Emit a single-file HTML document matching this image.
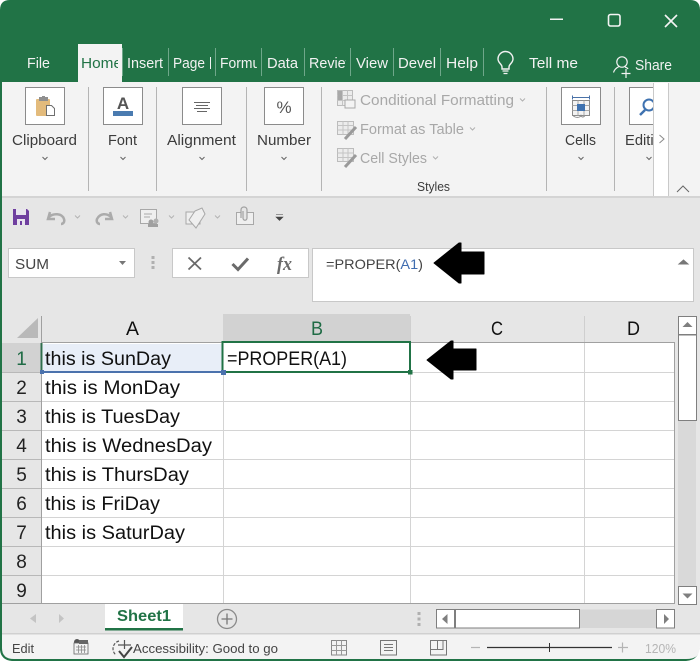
<!DOCTYPE html>
<html><head><meta charset="utf-8"><title>Excel</title>
<style>
html,body{margin:0;padding:0;background:#fff;width:700px;height:661px;overflow:hidden}
svg{display:block;font-family:"Liberation Sans",sans-serif}
</style></head><body>
<svg width="700" height="661" viewBox="0 0 700 661" xmlns="http://www.w3.org/2000/svg">
<defs>
<clipPath id="c1"><rect x="78" y="40" width="40" height="40"/></clipPath>
<clipPath id="c2"><rect x="170" y="40" width="41" height="40"/></clipPath>
<clipPath id="c3"><rect x="217" y="40" width="40" height="40"/></clipPath>
<clipPath id="c4"><rect x="306" y="40" width="40" height="40"/></clipPath>
<clipPath id="c5"><rect x="620" y="120" width="33" height="40"/></clipPath>
</defs>
<!-- frame -->
<path d="M0 661V10Q0 0 10 0H690Q700 0 700 10V661Z" fill="#217346"/>
<rect x="2" y="82" width="698" height="114" fill="#f3f3f3"/>
<rect x="2" y="196" width="698" height="2" fill="#d4d4d4"/>
<rect x="2" y="198" width="698" height="436" fill="#e6e6e6"/>
<path d="M2 634H700V648Q700 659 686 659H14Q2 659 2 648Z" fill="#f3f3f3"/>
<rect x="2" y="633" width="698" height="1.5" fill="#d0d0d0"/>
<path d="M686 661Q700 660 700 645V661Z" fill="#fff"/>
<path d="M0 650Q1 660 12 661H0Z" fill="#fff"/>

<!-- window controls -->
<rect x="550" y="18.5" width="13" height="1.5" fill="#f1f1f1"/>
<rect x="608.5" y="14.5" width="11.5" height="11.5" rx="2" fill="none" stroke="#f4f4f4" stroke-width="1.6"/>
<path d="M665 15L677 27M677 15L665 27" stroke="#f4f4f4" stroke-width="1.6"/>

<!-- tabs -->
<rect x="78" y="44" width="44" height="38" fill="#f3f3f3"/>
<g stroke="#6fa78a" stroke-width="1">
<path d="M122.5 48V76M168.5 48V76M215.5 48V76M261.5 48V76M304.5 48V76M350.5 48V76M393.5 48V76M440.5 48V76M483.5 48V76"/>
</g>
<g fill="#f2f2f2" font-size="14.5">
<text x="27" y="68" textLength="23" lengthAdjust="spacingAndGlyphs">File</text>
<g clip-path="url(#c1)"><text x="81" y="68" fill="#217346" textLength="41" lengthAdjust="spacingAndGlyphs">Home</text></g>
<text x="127" y="68" textLength="36" lengthAdjust="spacingAndGlyphs">Insert</text>
<g clip-path="url(#c2)"><text x="173" y="68" textLength="32" lengthAdjust="spacingAndGlyphs">Page</text><rect x="210" y="57" width="1" height="12"/></g>
<g clip-path="url(#c3)"><text x="220" y="68" textLength="58" lengthAdjust="spacingAndGlyphs">Formulas</text></g>
<text x="267" y="68" textLength="31" lengthAdjust="spacingAndGlyphs">Data</text>
<g clip-path="url(#c4)"><text x="309" y="68" textLength="47" lengthAdjust="spacingAndGlyphs">Review</text></g>
<text x="356" y="68" textLength="32" lengthAdjust="spacingAndGlyphs">View</text>
<text x="398" y="68" textLength="38" lengthAdjust="spacingAndGlyphs">Devel</text>
<text x="446" y="68" textLength="32" lengthAdjust="spacingAndGlyphs">Help</text>
<text x="529" y="68" textLength="49" lengthAdjust="spacingAndGlyphs">Tell me</text>
<text x="635" y="70" textLength="37" lengthAdjust="spacingAndGlyphs">Share</text>
</g>
<!-- bulb -->
<path d="M502 69V67C502 64 498 63 498 59A7.5 7.5 0 0 1 513 59C513 63 509 64 509 67V69Z" fill="none" stroke="#f2f2f2" stroke-width="1.4"/>
<path d="M502.5 71H508.5M503.5 73.5H507.5" stroke="#f2f2f2" stroke-width="1.3"/>
<!-- share -->
<circle cx="622" cy="62" r="5.2" fill="none" stroke="#f2f2f2" stroke-width="1.2"/>
<path d="M613.5 72.5C614.5 69 617 67.5 619 66.5M625 67C626.5 67.5 627.5 68 628 69" fill="none" stroke="#f2f2f2" stroke-width="1.2"/>
<path d="M626 69V78M621.5 73.5H630.5" stroke="#f2f2f2" stroke-width="1.2"/>

<!-- ribbon separators -->
<path d="M88.5 87V191M156.5 87V191M246.5 87V191M321.5 87V191M546.5 87V191M614.5 87V191" stroke="#b4b4b4" stroke-width="1"/>
<!-- ribbon buttons -->
<g fill="#fff" stroke="#8b8b8b" stroke-width="1">
<rect x="25.5" y="87.5" width="39" height="37"/>
<rect x="103.5" y="87.5" width="39" height="37"/>
<rect x="182.5" y="87.5" width="39" height="37"/>
<rect x="264.5" y="87.5" width="39" height="37"/>
<rect x="561.5" y="87.5" width="39" height="37"/>
<rect x="629.5" y="87.5" width="39" height="37"/>
</g>
<!-- clipboard icon -->
<rect x="36" y="99" width="14" height="17" rx="1" fill="#e3bb7c"/>
<rect x="39" y="97" width="9" height="4" fill="#8f8f8f"/>
<rect x="42" y="96" width="3" height="2" fill="#8f8f8f"/>
<path d="M46.5 105.5H51.5L54.5 108.5V115.5H46.5Z" fill="#fff" stroke="#6f6f6f" stroke-width="1"/>
<!-- font icon -->
<text x="123" y="109" text-anchor="middle" font-size="17" font-weight="bold" fill="#555">A</text>
<rect x="113" y="111" width="20" height="5" fill="#4a7bb0"/>
<!-- align icon -->
<path d="M194 102.5H210M196 105.5H208M194 108.5H210M197 111.5H207" stroke="#666" stroke-width="1"/>
<!-- percent -->
<text x="284" y="113" text-anchor="middle" font-size="17" fill="#555">%</text>
<!-- cells icon -->
<path d="M572.5 97.5H589.5M572.5 95.5V99.5M589.5 95.5V99.5" stroke="#4a72a8" stroke-width="1"/>
<rect x="572.5" y="100.5" width="17" height="15" fill="#f3f3f3" stroke="#8a8a8a"/>
<path d="M572.5 105.5H589.5M572.5 110.5H589.5M578 100.5V115.5M584 100.5V115.5" stroke="#a8a8a8"/>
<rect x="577" y="104" width="8" height="7" fill="#3f72b0"/>
<path d="M573 115.5C575 118 580 118 581 115.5C582 118 584 117 585 115.5" fill="none" stroke="#888"/>
<!-- magnifier -->
<circle cx="649" cy="105" r="5.5" fill="none" stroke="#3f72b0" stroke-width="2"/>
<path d="M645 110L640 115" stroke="#3f72b0" stroke-width="2.5"/>

<!-- ribbon labels -->
<g fill="#3c3c3c" font-size="14.5">
<text x="12" y="145" textLength="65" lengthAdjust="spacingAndGlyphs">Clipboard</text>
<text x="108" y="145" textLength="29" lengthAdjust="spacingAndGlyphs">Font</text>
<text x="167" y="145" textLength="69" lengthAdjust="spacingAndGlyphs">Alignment</text>
<text x="257" y="145" textLength="54" lengthAdjust="spacingAndGlyphs">Number</text>
<text x="565" y="145" textLength="31" lengthAdjust="spacingAndGlyphs">Cells</text>
<g clip-path="url(#c5)"><text x="625" y="145" textLength="45" lengthAdjust="spacingAndGlyphs">Editing</text></g>
<text x="417" y="191" font-size="13" textLength="33" lengthAdjust="spacingAndGlyphs">Styles</text>
</g>
<g fill="none" stroke="#666" stroke-width="1">
<path d="M42.5 157L45 159.5L47.5 157M120.5 157L123 159.5L125.5 157M199.5 157L202 159.5L204.5 157M281.5 157L284 159.5L286.5 157M578.5 157L581 159.5L583.5 157M646.5 157L649 159.5L651.5 157"/>
</g>
<!-- styles group -->
<g fill="#a8a8a8" font-size="14.5">
<text x="360" y="105" textLength="154" lengthAdjust="spacingAndGlyphs">Conditional Formatting</text>
<text x="360" y="134" textLength="104" lengthAdjust="spacingAndGlyphs">Format as Table</text>
<text x="360" y="163" textLength="67" lengthAdjust="spacingAndGlyphs">Cell Styles</text>
</g>
<path d="M520 98.5L522.5 101L525 98.5M470 127.5L472.5 130L475 127.5M433 156.5L435.5 159L438 156.5" fill="none" stroke="#b0b0b0"/>
<g stroke="#bcbcbc" fill="#ececec">
<rect x="337.5" y="90.5" width="15" height="15"/>
<rect x="337.5" y="121.5" width="16" height="13"/>
<rect x="337.5" y="148.5" width="16" height="13"/>
</g>
<path d="M337.5 95.5H352.5M337.5 100.5H352.5M342.5 90.5V105.5M347.5 90.5V105.5M337.5 125.5H353.5M337.5 130H353.5M343 121.5V134.5M348 121.5V134.5M337.5 153H353.5M337.5 157.5H353.5M343 148.5V161.5M348 148.5V161.5" stroke="#c4c4c4" fill="none"/>
<rect x="338" y="91" width="4" height="9" fill="#a8a8a8"/>
<rect x="345" y="100" width="10" height="8" fill="#f3f3f3" stroke="#a8a8a8"/>
<path d="M345 139L356 127M345 167L356 155" stroke="#9a9a9a" stroke-width="3"/>

<!-- right scroller strip -->
<rect x="654" y="83" width="14.5" height="113" fill="#fff"/>
<path d="M653.5 83V196M668.5 83V196" stroke="#c9c9c9"/>
<path d="M659.5 135L664 139L659.5 143" fill="none" stroke="#8a8a8a"/>
<path d="M677 192L683 186L689 192" fill="none" stroke="#666"/>

<!-- QAT -->
<path d="M13 209H27L29 211V225H13Z" fill="#6f3f9f"/>
<rect x="16" y="209" width="10" height="6" fill="#e8e4ee"/>
<rect x="17" y="219" width="8" height="6" fill="#e8e4ee"/>
<rect x="20" y="221" width="2" height="4" fill="#6f3f9f"/>
<path d="M50 212L48 219L55 219M49 217C53 213 62 213 64 219C65 222 63 224 61 224" fill="none" stroke="#ababab" stroke-width="2.5"/>
<path d="M110 212L112 219L105 219M111 217C107 213 100 213 97 219C96 222 98 224 100 224" fill="none" stroke="#ababab" stroke-width="2.5"/>
<path d="M75 215.5L77.5 218L80 215.5M123 215.5L125.5 218L128 215.5M169 215.5L171.5 218L174 215.5M215 215.5L217.5 218L220 215.5" fill="none" stroke="#b4b4b4"/>
<rect x="140.5" y="209.5" width="16" height="14" fill="#efefef" stroke="#a8a8a8"/>
<path d="M144 214H152M144 217H150" stroke="#a8a8a8"/>
<circle cx="151" cy="222" r="2.5" fill="#a0a0a0"/><circle cx="156" cy="221" r="2.5" fill="#b0b0b0"/><rect x="148" y="224" width="10" height="3" fill="#a0a0a0"/>
<rect x="186" y="212" width="14" height="12" fill="#efefef" stroke="#a8a8a8"/>
<path d="M195 211L202 208L205 214L196 228L189 220Z" fill="#efefef" stroke="#a8a8a8"/>
<rect x="236.5" y="212.5" width="17" height="12" fill="#efefef" stroke="#a8a8a8"/>
<path d="M241 218V210C241 206 247 206 247 210V218C247 221 243 221 243 218V211" fill="#e6e6e6" stroke="#a0a0a0" stroke-width="1.2"/>
<path d="M276 214.5H283M276 217H283L279.5 220.5Z" fill="#444" stroke="#444" stroke-width=".6"/>

<!-- name box etc. -->
<rect x="8.5" y="248.5" width="126" height="29" fill="#fff" stroke="#c8c8c8"/>
<text x="15" y="269" font-size="14.5" fill="#444" textLength="34" lengthAdjust="spacingAndGlyphs">SUM</text>
<path d="M119 261H126L122.5 265Z" fill="#777"/>
<g fill="#b0b0b0"><rect x="151.5" y="256" width="3" height="3"/><rect x="151.5" y="261" width="3" height="3"/><rect x="151.5" y="266" width="3" height="3"/></g>
<rect x="172.5" y="248.5" width="136" height="29" fill="#fff" stroke="#c8c8c8"/>
<path d="M188.5 257.5L201 269.5M201 257.5L188.5 269.5" stroke="#6a6a6a" stroke-width="1.8"/>
<path d="M232.5 264L238 269.5L248 258.5" fill="none" stroke="#6a6a6a" stroke-width="3"/>
<text x="277" y="270" font-family="Liberation Serif" font-style="italic" font-weight="bold" font-size="19" fill="#6a6a6a" textLength="15" lengthAdjust="spacingAndGlyphs">fx</text>
<rect x="312.5" y="248.5" width="381" height="53" fill="#fff" stroke="#c8c8c8"/>
<text x="326" y="269" font-size="14" fill="#444" textLength="97" lengthAdjust="spacingAndGlyphs">=PROPER(<tspan fill="#3f6cb0">A1</tspan>)</text>
<path d="M679 264L683.5 260L688 264Z" fill="#777" stroke="#777"/>
<!-- arrow 1 -->
<path d="M434 263L459 243H461V252H484V274H461V283H459Z" fill="#000" stroke="#000" stroke-linejoin="round"/>

<!-- grid -->
<rect x="42" y="343" width="632" height="261" fill="#fff"/>
<rect x="223" y="314" width="187" height="28" fill="#d2d2d2"/>
<rect x="2" y="343" width="39" height="29" fill="#d2d2d2"/>
<path d="M17 338L38 318V338Z" fill="#b9b9b9"/>
<g stroke="#d4d4d4" stroke-width="1">
<path d="M42 372.5H674M42 401.5H674M42 430.5H674M42 459.5H674M42 488.5H674M42 517.5H674M42 546.5H674M42 575.5H674"/>
<path d="M223.5 343V604M410.5 343V604M584.5 343V604"/>
<path d="M410.5 316V342M584.5 316V342" stroke="#cfcfcf"/>
</g>
<path d="M2 372.5H41M2 401.5H41M2 430.5H41M2 459.5H41M2 488.5H41M2 517.5H41M2 546.5H41M2 575.5H41" stroke="#b8b8b8"/>
<path d="M41.5 316V604M41 342.5H674.5M674.5 342V604M2 603.5H675" stroke="#a0a0a0" fill="none"/>
<!-- selection -->
<rect x="43" y="344" width="180" height="27" fill="#e8eef8"/>
<rect x="42" y="371" width="181" height="2" fill="#4b72ad"/>
<rect x="40.5" y="343" width="2" height="29" fill="#2f6e4e"/>
<rect x="222.5" y="342" width="187.5" height="30" fill="#fff" stroke="#217346" stroke-width="2"/>
<rect x="40" y="370" width="4" height="4" fill="#4b72ad"/>
<rect x="221" y="370" width="5" height="5" fill="#4b72ad"/>
<rect x="408" y="370" width="4.5" height="4.5" fill="#217346"/>

<g font-size="19" fill="#111">
<text x="126" y="335" textLength="13" lengthAdjust="spacingAndGlyphs">A</text>
<text x="311" y="335" fill="#1f6b45" textLength="12" lengthAdjust="spacingAndGlyphs">B</text>
<text x="491" y="335" textLength="12" lengthAdjust="spacingAndGlyphs">C</text>
<text x="627" y="335" textLength="13" lengthAdjust="spacingAndGlyphs">D</text>
<g text-anchor="middle" fill="#222">
<text x="21.5" y="365" fill="#1f6b45">1</text>
<text x="21.5" y="394">2</text>
<text x="21.5" y="423">3</text>
<text x="21.5" y="452">4</text>
<text x="21.5" y="481">5</text>
<text x="21.5" y="510">6</text>
<text x="21.5" y="539">7</text>
<text x="21.5" y="568">8</text>
<text x="21.5" y="597">9</text>
</g>
<text x="45" y="365" textLength="126" lengthAdjust="spacingAndGlyphs">this is SunDay</text>
<text x="45" y="394" textLength="135" lengthAdjust="spacingAndGlyphs">this is MonDay</text>
<text x="45" y="423" textLength="135" lengthAdjust="spacingAndGlyphs">this is TuesDay</text>
<text x="45" y="452" textLength="167" lengthAdjust="spacingAndGlyphs">this is WednesDay</text>
<text x="45" y="481" textLength="144" lengthAdjust="spacingAndGlyphs">this is ThursDay</text>
<text x="45" y="510" textLength="115" lengthAdjust="spacingAndGlyphs">this is FriDay</text>
<text x="45" y="539" textLength="140" lengthAdjust="spacingAndGlyphs">this is SaturDay</text>
<text x="227" y="365" textLength="120" lengthAdjust="spacingAndGlyphs">=PROPER(A1)</text>
</g>
<!-- arrow 2 -->
<path d="M427 360L451 341H453V349H476V370H453V379H451Z" fill="#000" stroke="#000" stroke-linejoin="round"/>

<!-- v scrollbar -->
<rect x="678" y="316" width="18" height="288" fill="#d9d9d9"/>
<rect x="678.5" y="316.5" width="18" height="18" fill="#fff" stroke="#7f7f7f"/>
<path d="M682.5 327H692.5L687.5 322Z" fill="#7f7f7f"/>
<rect x="678.5" y="335" width="18" height="85.5" fill="#fff" stroke="#7f7f7f"/>
<rect x="678.5" y="586.5" width="18" height="18" fill="#fff" stroke="#7f7f7f"/>
<path d="M682.5 593.5H692.5L687.5 598.5Z" fill="#7f7f7f"/>

<!-- sheet bar -->
<rect x="105" y="604" width="78" height="26" fill="#fff"/>
<rect x="105" y="628" width="78" height="2.5" fill="#217346"/>
<text x="117" y="621" font-size="16" font-weight="bold" fill="#217346" textLength="54" lengthAdjust="spacingAndGlyphs">Sheet1</text>
<circle cx="227" cy="619" r="9.5" fill="none" stroke="#8a8a8a" stroke-width="1.3"/>
<path d="M221.5 619H232.5M227 613.5V624.5" stroke="#777" stroke-width="1.3"/>
<path d="M36 614V623L30 618.5ZM59 614V623L64 618.5Z" fill="#c4c4c4"/>
<g fill="#b0b0b0"><rect x="417.5" y="612" width="3" height="3"/><rect x="417.5" y="617.5" width="3" height="3"/><rect x="417.5" y="623" width="3" height="3"/></g>
<rect x="436.5" y="609.5" width="238" height="18.5" fill="#d6d6d6"/>
<rect x="436.5" y="609.5" width="18" height="18.5" fill="#fff" stroke="#7f7f7f"/>
<path d="M447.5 614V624L442 619Z" fill="#7f7f7f"/>
<rect x="455.5" y="609.5" width="124" height="18.5" fill="#fff" stroke="#7f7f7f"/>
<rect x="656.5" y="609.5" width="18" height="18.5" fill="#fff" stroke="#7f7f7f"/>
<path d="M664 614V624L669 619Z" fill="#7f7f7f"/>

<!-- status bar -->
<text x="12" y="653" font-size="13" fill="#444" textLength="22" lengthAdjust="spacingAndGlyphs">Edit</text>
<circle cx="77" cy="642" r="3" fill="#555"/>
<rect x="74" y="643" width="14" height="11" fill="#f3f3f3" stroke="#666" stroke-width=".8"/>
<rect x="79" y="640" width="9" height="4" fill="#666"/>
<path d="M76 647H86M76 650H86M78.5 645V653M81.5 645V653M84.5 645V653" stroke="#888" stroke-width=".8"/>
<path d="M119 641A8 8 0 0 0 116 655" fill="none" stroke="#555" stroke-width="1.2" stroke-dasharray="3 1.5"/>
<path d="M118 645H131M124.5 640V649" stroke="#555" stroke-width="1.2"/>
<path d="M119 651L124 657L132 647" fill="none" stroke="#444" stroke-width="2"/>
<text x="133" y="653" font-size="13" fill="#444" textLength="145" lengthAdjust="spacingAndGlyphs">Accessibility: Good to go</text>
<rect x="331.5" y="640.5" width="15" height="14.5" fill="#f3f3f3" stroke="#888"/>
<path d="M331.5 645.5H346.5M331.5 650.5H346.5M336.5 640.5V655M341.5 640.5V655" stroke="#999"/>
<rect x="380.5" y="640.5" width="16" height="14.5" fill="#f3f3f3" stroke="#777"/>
<path d="M384 644.5H393M384 647.5H393M384 650.5H393" stroke="#777"/>
<rect x="430.5" y="640.5" width="16" height="14.5" fill="#f3f3f3" stroke="#777"/>
<path d="M430.5 649.5H443V640.5M437.5 640.5V649.5" fill="none" stroke="#777"/>
<path d="M471 647.5H480" stroke="#b4b4b4" stroke-width="1.2"/>
<path d="M487 647.5H612" stroke="#333" stroke-width="1.2"/>
<path d="M549.5 643V652" stroke="#333"/>
<path d="M618 647.5H628M622.5 642.5V652.5" stroke="#b4b4b4" stroke-width="1.2"/>
<text x="645" y="653" font-size="13" fill="#b5b5b5" textLength="31" lengthAdjust="spacingAndGlyphs">120%</text>
</svg>
</body></html>
